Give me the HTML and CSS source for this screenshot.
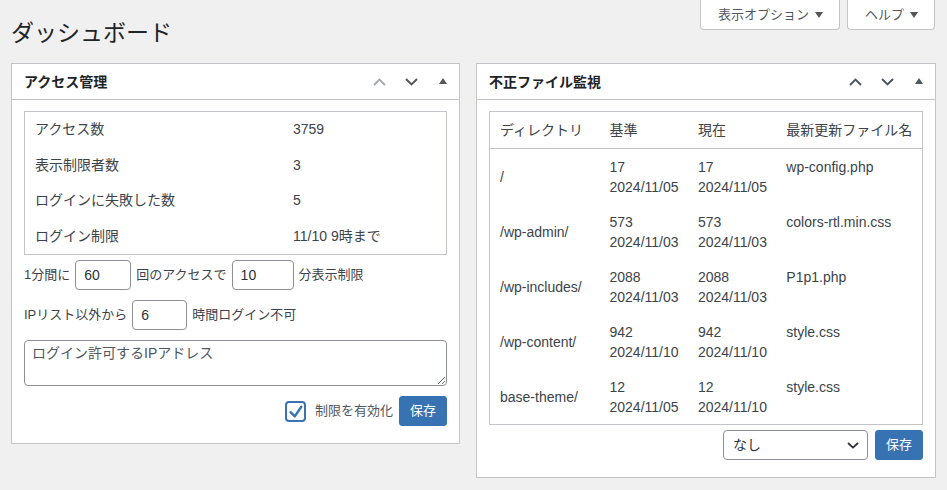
FILE: index.html
```html
<!DOCTYPE html>
<html lang="ja">
<head>
<meta charset="utf-8">
<title>ダッシュボード</title>
<link rel="stylesheet" href="styles.css">
</head>
<body>
<div class="page">
  <header class="top">
    <h1 class="title">ダッシュボード</h1>
    <div class="meta-links">
      <button class="meta-btn" type="button">表示オプション<span class="caret"></span></button>
      <button class="meta-btn" type="button">ヘルプ<span class="caret"></span></button>
    </div>
  </header>

  <div class="columns">
    <section class="postbox postbox-left">
      <div class="postbox-header">
        <h2 class="postbox-title">アクセス管理</h2>
        <div class="handle-actions">
          <button class="handle-btn is-disabled" type="button" aria-label="上へ移動">
            <svg class="chev chev-up" width="13" height="8" viewBox="0 0 13 8"><polyline points="1,7 6.5,1.6 12,7" fill="none" stroke="currentColor" stroke-width="2"/></svg>
          </button>
          <button class="handle-btn" type="button" aria-label="下へ移動">
            <svg class="chev chev-down" width="13" height="8" viewBox="0 0 13 8"><polyline points="1,1 6.5,6.4 12,1" fill="none" stroke="currentColor" stroke-width="2"/></svg>
          </button>
          <button class="handle-btn" type="button" aria-label="パネルを切り替え">
            <span class="tri"></span>
          </button>
        </div>
      </div>
      <div class="inside">
        <table class="stats">
          <colgroup><col class="stats-label"><col></colgroup>
          <tbody>
            <tr><td>アクセス数</td><td>3759</td></tr>
            <tr><td>表示制限者数</td><td>3</td></tr>
            <tr><td>ログインに失敗した数</td><td>5</td></tr>
            <tr><td>ログイン制限</td><td>11/10 9時まで</td></tr>
          </tbody>
        </table>

        <div class="form-row form-row-first">
          <span>1分間に</span>
          <input class="num num-a" type="text" value="60">
          <span>回のアクセスで</span>
          <input class="num num-b" type="text" value="10">
          <span>分表示制限</span>
        </div>
        <div class="form-row">
          <span>IPリスト以外から</span>
          <input class="num num-c" type="text" value="6">
          <span>時間ログイン不可</span>
        </div>

        <textarea class="ip-list" placeholder="ログイン許可するIPアドレス"></textarea>

        <div class="actions">
          <span class="check" role="checkbox" aria-checked="true">
            <svg width="20" height="20" viewBox="0 0 20 20"><polyline points="4.2,10.8 9.2,15.8 16.8,4.4" fill="none" stroke="#3a73b2" stroke-width="2.8" stroke-linecap="round" stroke-linejoin="round"/></svg>
          </span>
          <span class="check-label">制限を有効化</span>
          <button class="btn-primary" type="button">保存</button>
        </div>
      </div>
    </section>

    <section class="postbox postbox-right">
      <div class="postbox-header">
        <h2 class="postbox-title">不正ファイル監視</h2>
        <div class="handle-actions">
          <button class="handle-btn" type="button" aria-label="上へ移動">
            <svg class="chev chev-up" width="13" height="8" viewBox="0 0 13 8"><polyline points="1,7 6.5,1.6 12,7" fill="none" stroke="currentColor" stroke-width="2"/></svg>
          </button>
          <button class="handle-btn" type="button" aria-label="下へ移動">
            <svg class="chev chev-down" width="13" height="8" viewBox="0 0 13 8"><polyline points="1,1 6.5,6.4 12,1" fill="none" stroke="currentColor" stroke-width="2"/></svg>
          </button>
          <button class="handle-btn" type="button" aria-label="パネルを切り替え">
            <span class="tri"></span>
          </button>
        </div>
      </div>
      <div class="inside">
        <table class="files">
          <colgroup>
            <col class="c-dir"><col class="c-base"><col class="c-now"><col class="c-name">
          </colgroup>
          <thead>
            <tr><th>ディレクトリ</th><th>基準</th><th>現在</th><th>最新更新ファイル名</th></tr>
          </thead>
          <tbody>
            <tr><td class="dir">/</td><td>17<br>2024/11/05</td><td>17<br>2024/11/05</td><td>wp-config.php</td></tr>
            <tr><td class="dir">/wp-admin/</td><td>573<br>2024/11/03</td><td>573<br>2024/11/03</td><td>colors-rtl.min.css</td></tr>
            <tr><td class="dir">/wp-includes/</td><td>2088<br>2024/11/03</td><td>2088<br>2024/11/03</td><td>P1p1.php</td></tr>
            <tr><td class="dir">/wp-content/</td><td>942<br>2024/11/10</td><td>942<br>2024/11/10</td><td>style.css</td></tr>
            <tr><td class="dir">base-theme/</td><td>12<br>2024/11/05</td><td>12<br>2024/11/10</td><td>style.css</td></tr>
          </tbody>
        </table>

        <div class="select-row">
          <div class="select-wrap">
            <select class="select">
              <option>なし</option>
            </select>
            <svg class="select-chev" width="12" height="7" viewBox="0 0 12 7"><polyline points="1,1 6,5.6 11,1" fill="none" stroke="#2c3338" stroke-width="1.8"/></svg>
          </div>
          <button class="btn-primary" type="button">保存</button>
        </div>
      </div>
    </section>
  </div>
</div>
</body>
</html>
```
FILE: styles.css
```css
* {
  box-sizing: border-box;
}

html,
body {
  margin: 0;
  padding: 0;
}

body {
  width: 947px;
  height: 490px;
  overflow: hidden;
  background: #f0f0f1;
  color: #3c434a;
  font-family: "Liberation Sans", "Noto Sans CJK JP", sans-serif;
  font-size: 13px;
}

.page {
  padding: 0 11px;
}

/* ---------- top bar ---------- */
.top {
  display: flex;
  justify-content: space-between;
  align-items: flex-start;
  height: 63px;
}

.title {
  margin: 18px 0 0;
  font-size: 23px;
  font-weight: 400;
  line-height: 30px;
  color: #1d2327;
}

.meta-links {
  display: flex;
  gap: 7px;
  margin-right: 1px;
}

.meta-btn {
  display: flex;
  align-items: center;
  height: 30px;
  padding: 0 16px 0 17px;
  background: #fff;
  border: 1px solid #c3c4c7;
  border-top: none;
  border-radius: 0 0 4px 4px;
  color: #50575e;
  font-family: "Liberation Sans", "Noto Sans CJK JP", sans-serif;
  font-size: 13px;
  line-height: 20px;
}

.caret {
  display: inline-block;
  width: 0;
  height: 0;
  margin-left: 6px;
  border-left: 4.5px solid transparent;
  border-right: 4.5px solid transparent;
  border-top: 6px solid #50575e;
}

/* ---------- panels ---------- */
.columns {
  display: flex;
  align-items: flex-start;
  gap: 16px;
}

.postbox {
  background: #fff;
  border: 1px solid #c3c4c7;
}

.postbox-left {
  width: 449px;
}

.postbox-right {
  width: 460px;
}

.postbox-header {
  display: flex;
  align-items: center;
  justify-content: space-between;
  height: 36px;
  border-bottom: 1px solid #c3c4c7;
}

.postbox-title {
  margin: 0;
  padding-left: 12px;
  font-size: 14px;
  font-weight: 700;
  line-height: 20px;
  color: #1d2327;
}

.handle-actions {
  display: flex;
  height: 35px;
}

.handle-btn {
  display: flex;
  align-items: center;
  justify-content: center;
  width: 32px;
  height: 35px;
  padding: 0;
  background: none;
  border: none;
  color: #50575e;
}

.handle-btn.is-disabled {
  color: #a7aaad;
}

.chev {
  display: block;
  margin-top: 1px;
}

.tri {
  display: block;
  width: 0;
  height: 0;
  margin-top: -2px;
  border-left: 4.5px solid transparent;
  border-right: 4.5px solid transparent;
  border-bottom: 6px solid #50575e;
}

.inside {
  padding: 11px 12px 17px;
}

/* ---------- left: stats ---------- */
.stats {
  width: 100%;
  table-layout: fixed;
  border: 1px solid #c3c4c7;
  border-collapse: separate;
  border-spacing: 0;
  font-size: 14px;
  color: #3c434a;
}

.stats-label {
  width: 258px;
}

.stats td {
  padding: 8px 10px;
  line-height: 19.5px;
  white-space: nowrap;
}

.form-row {
  display: flex;
  align-items: center;
  gap: 5px;
  margin-top: 10px;
  font-size: 13px;
  line-height: 20px;
}

.form-row-first {
  margin-top: 5px;
}

.num {
  height: 30px;
  padding: 0 8px;
  border: 1px solid #8c8f94;
  border-radius: 4px;
  background: #fff;
  color: #2c3338;
  font-family: "Liberation Sans", "Noto Sans CJK JP", sans-serif;
  font-size: 14px;
}

.num-a {
  width: 56px;
}

.num-b {
  width: 62px;
}

.num-c {
  width: 55px;
}

.ip-list {
  display: block;
  width: 100%;
  height: 46px;
  margin: 10px 0 0;
  padding: 2px 7px;
  border: 1px solid #8c8f94;
  border-radius: 4px;
  background: #fff;
  color: #2c3338;
  font-family: "Liberation Sans", "Noto Sans CJK JP", sans-serif;
  font-size: 14px;
  line-height: 20px;
}

.ip-list::placeholder {
  color: #50575e;
}

.actions {
  display: flex;
  justify-content: flex-end;
  align-items: center;
  margin-top: 10px;
}

.check {
  display: flex;
  align-items: center;
  justify-content: center;
  width: 21px;
  height: 21px;
  border: 2px solid #3a73b2;
  border-radius: 4px;
  background: #fff;
}

.check svg {
  display: block;
  width: 17px;
  height: 17px;
}

.check-label {
  margin: 0 6px 0 9px;
  font-size: 13px;
  line-height: 20px;
  color: #50575e;
}

.btn-primary {
  height: 30px;
  padding: 0 10px;
  background: #3772b2;
  border: 1px solid #3772b2;
  border-radius: 3px;
  color: #fff;
  font-family: "Liberation Sans", "Noto Sans CJK JP", sans-serif;
  font-size: 13px;
  line-height: 20px;
}

/* ---------- right: files ---------- */
.files {
  width: 100%;
  table-layout: fixed;
  border: 1px solid #c3c4c7;
  border-collapse: separate;
  border-spacing: 0;
  font-size: 14px;
  color: #3c434a;
}

.c-dir {
  width: 109px;
}

.c-base,
.c-now {
  width: 88px;
}

.c-name {
  width: 145px;
}

.files th {
  padding: 8px 10px;
  line-height: 20px;
  font-weight: 400;
  text-align: left;
  white-space: nowrap;
  color: #3c434a;
  border-bottom: 1px solid #c3c4c7;
}

.files td {
  padding: 8px 10px 7px;
  line-height: 20px;
  vertical-align: top;
  white-space: nowrap;
}

.files td.dir {
  vertical-align: middle;
}

.select-row {
  display: flex;
  justify-content: flex-end;
  align-items: center;
  gap: 7px;
  margin-top: 5px;
}

.select-wrap {
  position: relative;
  width: 145px;
  height: 30px;
}

.select {
  width: 100%;
  height: 30px;
  padding: 0 24px 0 9px;
  -webkit-appearance: none;
  appearance: none;
  border: 1px solid #8c8f94;
  border-radius: 4px;
  background: #fff;
  color: #2c3338;
  font-family: "Liberation Sans", "Noto Sans CJK JP", sans-serif;
  font-size: 14px;
}

.select-chev {
  position: absolute;
  right: 9px;
  top: 12px;
  pointer-events: none;
}
```
